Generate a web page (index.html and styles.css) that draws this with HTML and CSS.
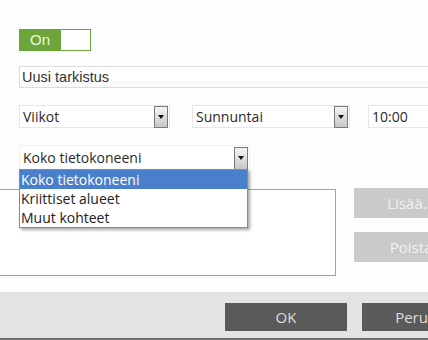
FILE: index.html
```html
<!DOCTYPE html>
<html lang="fi">
<head>
    <meta charset="UTF-8">
    <meta name="viewport" content="width=device-width, initial-scale=1.0">
    <title>Tarkistus</title>
    <link rel="stylesheet" href="styles.css">
</head>
<body>
    <div class="page">
        <div class="toggle">
            <span class="toggle-on">On</span>
            <span class="toggle-off"></span>
        </div>

        <div class="name-field">Uusi tarkistus</div>

        <div class="schedule">
            <div class="select select-period">
                <span class="select-text">Viikot</span>
                <span class="arrow"></span>
            </div>
            <div class="select select-day">
                <span class="select-text">Sunnuntai</span>
                <span class="arrow"></span>
            </div>
            <div class="time-field">10:00</div>
        </div>

        <div class="scope">
            <div class="select select-scope">
                <span class="select-text">Koko tietokoneeni</span>
                <span class="arrow"></span>
            </div>
            <!-- open dropdown list -->
            <ul class="dropdown">
                <li class="selected">Koko tietokoneeni</li>
                <li>Kriittiset alueet</li>
                <li>Muut kohteet</li>
            </ul>
        </div>

        <div class="targets">
            <div class="target-list"></div>
            <div class="target-buttons">
                <button class="btn-light">Lisää...</button>
                <button class="btn-light">Poista</button>
            </div>
        </div>
    </div>

    <div class="footer">
        <button class="btn-dark">OK</button>
        <button class="btn-dark">Peruuta</button>
    </div>
</body>
</html>
```

FILE: styles.css
```css
html, body {
    margin: 0;
    overflow: hidden;
    background-color: #fdfdfd;
}
body {
    width: 428px;
    height: 340px;
    font-family: "Open Sans", sans-serif;
    color: #2a2a2a;
}
.page {
    padding: 29px 0 16px 19px;
}

/* On/off switch */
.toggle {
    display: flex;
    width: 72px;
    height: 22px;
}
.toggle-on {
    width: 42px;
    background-color: #6ca63a;
    color: #eaf5dc;
    font-family: "Liberation Sans", Arial, sans-serif;
    font-size: 15px;
    line-height: 22px;
    text-align: center;
}
.toggle-off {
    flex: 1;
    border: 1px solid #6ca63a;
    border-left: none;
    background-color: #fff;
}

.name-field {
    margin-top: 15px;
    width: 460px;
    height: 20px;
    border: 1px solid #dcdcdc;
    border-right: none;
    background-color: #fff;
    box-shadow: inset 0 -6px 0 #fafafa;
    font-family: "Liberation Sans", Arial, sans-serif;
    font-size: 14.5px;
    line-height: 20px;
    padding-left: 2px;
    color: #333;
}

/* Select boxes */
.schedule {
    display: flex;
    margin-top: 17px;
}
.schedule > div {
    flex-shrink: 0;
}
.select {
    display: flex;
    align-items: center;
    justify-content: space-between;
    height: 21px;
    border: 1px solid #e6e6e6;
    background-color: #fff;
    padding: 0 1px 0 3px;
}
.select-text {
    font-size: 14px;
    line-height: 21px;
}
.select-period {
    width: 145px;
}
.select-day {
    width: 152px;
    margin-left: 22px;
}
.time-field {
    margin-left: 18px;
    width: 80px;
    height: 21px;
    border: 1px solid #e6e6e6;
    background-color: #fff;
    padding-left: 3px;
    font-size: 14px;
    line-height: 21px;
}
.arrow {
    position: relative;
    width: 12px;
    height: 20px;
    border: 1px solid #7a7a7a;
    background: linear-gradient(#f4f4f4, #c8c8c8);
}
.arrow::after {
    content: "";
    position: absolute;
    left: 3px;
    top: 8px;
    border-left: 3px solid transparent;
    border-right: 3px solid transparent;
    border-top: 4px solid #111;
}

.scope {
    position: relative;
    margin-top: 17px;
}
.select-scope {
    width: 225px;
    height: 23px;
    border-color: #f0f0f0;
}
.select-scope .arrow {
    height: 21px;
    margin-top: 2px;
}
.dropdown {
    position: absolute;
    top: 24px;
    left: 0;
    z-index: 10;
    width: 227px;
    margin: 0;
    padding: 0;
    list-style: none;
    border: 1px solid #8a8a8a;
    background-color: #fff;
    box-shadow: 2px 2px 3px rgba(0, 0, 0, 0.35);
}
.dropdown li {
    height: 19px;
    padding-left: 1px;
    font-size: 14px;
    line-height: 19px;
    color: #222;
}
.dropdown li.selected {
    background-color: #4a7fcb;
    color: #fff;
}

/* Target list and buttons */
.targets {
    display: flex;
    margin-top: 18px;
}
.target-list {
    flex-shrink: 0;
    margin: 1px 0 0 -21px;
    width: 336px;
    height: 85px;
    border: 1px solid #9aa4b2;
    background-color: #fff;
}
.target-buttons {
    flex-shrink: 0;
    display: flex;
    flex-direction: column;
    gap: 14px;
    margin-left: 18px;
}
button {
    font-family: "Open Sans", sans-serif;
    border: none;
    padding: 0;
    cursor: pointer;
}
.btn-light {
    width: 114px;
    height: 30px;
    background-color: #cacaca;
    color: #f2f2f2;
    font-size: 15px;
}

.footer {
    display: flex;
    gap: 15px;
    padding: 10px 0 0 225px;
    box-sizing: border-box;
    height: 48px;
    border-top: 1px solid #dedede;
    border-bottom: 2px solid #707070;
    background-color: #e4e4e4;
}
.btn-dark {
    flex-shrink: 0;
    width: 122px;
    height: 28px;
    background-color: #5a5a5a;
    color: #dedede;
    font-size: 15px;
}
```
